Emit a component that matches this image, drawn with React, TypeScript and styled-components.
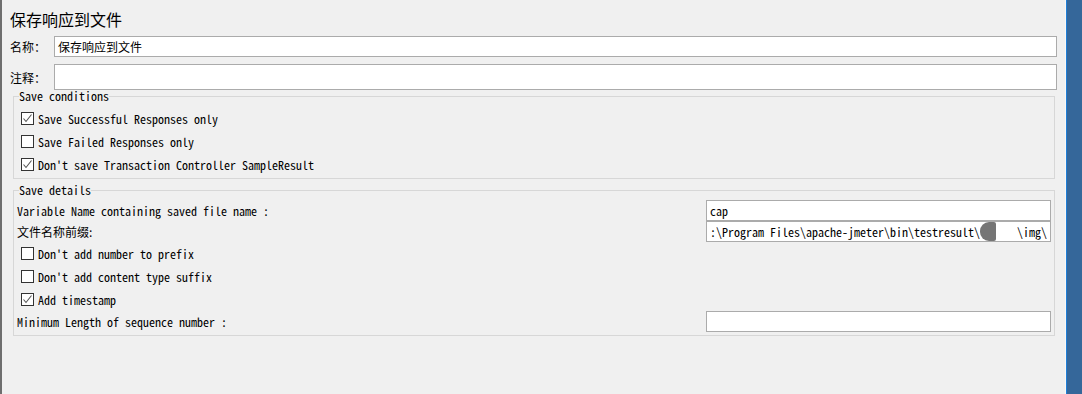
import React from 'react';
import styled, { createGlobalStyle } from 'styled-components';

const GlobalStyle = createGlobalStyle`
    html, body {
        margin: 0;
        padding: 0;
        background: #f0f0f0;
    }
`;

const MONO = `"Noto Sans Mono CJK SC", "Liberation Mono", monospace`;
const CJK = `"Noto Sans CJK SC", "Liberation Sans", sans-serif`;

const Frame = styled.div`
    width: 1082px;
    height: 394px;
    display: flex;
    overflow: hidden;
    background: #f0f0f0;
`;

const Main = styled.div`
    width: 1065px;
    flex-shrink: 0;
    box-sizing: border-box;
    border-left: 2px solid #6e6e6e;
    padding: 8px 8px 0 8px;
    display: flex;
    flex-direction: column;
`;

const SideStrip = styled.div`
    flex: 1;
    border-left: 1px solid #f8f8f8;
    display: flex;
`;

const SideBlue = styled.div`
    flex: 1;
    background: #35679a;
    border-left: 1px solid #1f7fd8;
`;

const Title = styled.div`
    font-family: ${CJK};
    font-size: 16px;
    line-height: 22px;
    color: #000;
    height: 22px;
`;

const FieldRow = styled.div<{ $top: number }>`
    display: flex;
    align-items: center;
    margin-top: ${(p) => p.$top}px;
`;

const FieldLabel = styled.div`
    width: 44px;
    flex-shrink: 0;
    font-family: ${CJK};
    font-size: 12px;
    color: #000;
`;

const TextBox = styled.div<{ $h: number; $w?: number }>`
    box-sizing: border-box;
    height: ${(p) => p.$h}px;
    ${(p) => (p.$w ? `width: ${p.$w}px; flex-shrink: 0;` : 'flex: 1;')}
    background: #fff;
    border: 1px solid #ababab;
    padding: 0 3px;
    display: flex;
    align-items: center;
    overflow: hidden;
    white-space: pre;
    font-size: 12px;
    color: #000;
`;

const CjkValue = styled.span`
    font-family: ${CJK};
`;

const MonoValue = styled.span`
    font-family: ${MONO};
`;

const Blot = styled.span`
    display: inline-block;
    width: 19px;
    height: 19px;
    background: #757575;
    border-radius: 9px 2px 2px 9px;
    margin-right: 21px;
    vertical-align: middle;
`;

const Group = styled.fieldset<{ $top: number; $bottom: number }>`
    margin: ${(p) => p.$top}px 2px 0 3px;
    padding: 0 3px ${(p) => p.$bottom}px 3px;
    border: 1px solid #d7d7d7;
    min-width: 0;
`;

const Legend = styled.legend`
    font-family: ${MONO};
    font-size: 12px;
    line-height: 12px;
    padding: 0;
    margin-left: 2px;
    color: #000;
`;

const Rows = styled.div<{ $top: number }>`
    display: flex;
    flex-direction: column;
    padding-top: ${(p) => p.$top}px;
`;

const CheckRow = styled.label`
    height: 23px;
    display: flex;
    align-items: center;
    gap: 4px;
    padding-left: 4px;
    font-family: ${MONO};
    font-size: 12px;
    color: #000;
`;

const Box = styled.span`
    box-sizing: border-box;
    width: 13px;
    height: 13px;
    flex-shrink: 0;
    background: #fff;
    border: 1px solid #333;
    display: flex;
    align-items: center;
    justify-content: center;
`;

const DetailRow = styled.div`
    height: 21px;
    display: flex;
    align-items: center;
    justify-content: space-between;
`;

const DetailLabel = styled.span<{ $cjk?: boolean }>`
    font-family: ${(p) => (p.$cjk ? CJK : MONO)};
    font-size: 12px;
    color: #000;
`;

const Check: React.FC<{ checked?: boolean; label: string }> = ({ checked, label }) => (
    <CheckRow>
        <Box>
            {checked && (
                <svg width="11" height="11" viewBox="0 0 11 11">
                    <path d="M1.5 5.5 L4 8.5 L9.5 1.5" fill="none" stroke="#555" strokeWidth="1.1" />
                </svg>
            )}
        </Box>
        <span>{label}</span>
    </CheckRow>
);

export default function App() {
    return (
        <>
            <GlobalStyle />
            <Frame>
                <Main>
                    <Title>保存响应到文件</Title>
                    <FieldRow $top={6}>
                        <FieldLabel>名称：</FieldLabel>
                        <TextBox $h={21}><CjkValue>保存响应到文件</CjkValue></TextBox>
                    </FieldRow>
                    <FieldRow $top={7}>
                        <FieldLabel>注释：</FieldLabel>
                        <TextBox $h={26} />
                    </FieldRow>

                    <Group $top={0} $bottom={2}>
                        <Legend>Save conditions</Legend>
                        <Rows $top={5}>
                            <Check checked label="Save Successful Responses only" />
                            <Check label="Save Failed Responses only" />
                            <Check checked label="Don't save Transaction Controller SampleResult" />
                        </Rows>
                    </Group>

                    <Group $top={5} $bottom={3}>
                        <Legend>Save details</Legend>
                        <Rows $top={4}>
                            <DetailRow>
                                <DetailLabel>Variable Name containing saved file name :</DetailLabel>
                                <TextBox $h={21} $w={345}><MonoValue>cap</MonoValue></TextBox>
                            </DetailRow>
                            <DetailRow>
                                <DetailLabel $cjk>文件名称前缀:</DetailLabel>
                                <TextBox $h={21} $w={345}>
                                    <MonoValue>:\Program Files\apache-jmeter\bin\testresult\</MonoValue>
                                    <Blot />
                                    <MonoValue>\img\</MonoValue>
                                </TextBox>
                            </DetailRow>
                            <Check label="Don't add number to prefix" />
                            <Check label="Don't add content type suffix" />
                            <Check checked label="Add timestamp" />
                            <DetailRow>
                                <DetailLabel>Minimum Length of sequence number :</DetailLabel>
                                <TextBox $h={21} $w={345} />
                            </DetailRow>
                        </Rows>
                    </Group>
                </Main>
                <SideStrip>
                    <SideBlue />
                </SideStrip>
            </Frame>
        </>
    );
}
